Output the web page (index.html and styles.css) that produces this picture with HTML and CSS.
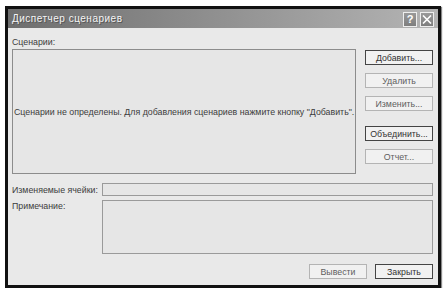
FILE: index.html
```html
<!DOCTYPE html>
<html lang="ru">
<head>
<meta charset="utf-8">
<title>Диспетчер сценариев</title>
<link rel="stylesheet" href="styles.css">
</head>
<body>
<div class="dialog">
  <div class="titlebar">
    <span class="title">Диспетчер сценариев</span>
    <div class="tbtns">
      <span class="tbtn">?</span>
      <span class="tbtn">
        <svg width="10" height="9" viewBox="0 0 10 9"><path d="M1 0.5 L9 8.5 M9 0.5 L1 8.5" stroke="#fff" stroke-width="1.6" fill="none"/></svg>
      </span>
    </div>
  </div>
  <div class="content">
    <div class="lbl-top">Сценарии:</div>
    <div class="main">
      <div class="listbox">Сценарии не определены. Для добавления сценариев нажмите кнопку "Добавить".</div>
      <div class="side">
        <div class="btn def">Добавить...</div>
        <div class="btn dis">Удалить</div>
        <div class="btn dis">Изменить...</div>
        <div class="btn def sep">Объединить...</div>
        <div class="btn dis">Отчет...</div>
      </div>
    </div>
    <div class="row cells">
      <span class="rlabel">Изменяемые ячейки:</span>
      <div class="field"></div>
    </div>
    <div class="row note">
      <span class="rlabel">Примечание:</span>
      <div class="field area"></div>
    </div>
    <div class="footer">
      <div class="btn dis wide">Вывести</div>
      <div class="btn def wide">Закрыть</div>
    </div>
  </div>
</div>
</body>
</html>
```
FILE: styles.css
```css
html, body {
  margin: 0;
  padding: 0;
  background: #fff;
}
body {
  padding: 6px 0 0 5px;
  font-family: "Liberation Sans", "DejaVu Sans", sans-serif;
  font-size: 8.8px;
  color: #3c3c3c;
}
.dialog {
  width: 430px;
  height: 276px;
  border: 3px solid #111;
  background: #e9e9e9;
  display: flex;
  flex-direction: column;
  box-shadow: 1px 1px 1px #888;
}
.titlebar {
  height: 19px;
  background: linear-gradient(to right, #6e6e6e 0%, #8a8a8a 40%, #b4b4b4 100%);
  display: flex;
  align-items: center;
  justify-content: space-between;
  padding: 0 4px 0 4px;
}
.title {
  color: #f4f4f4;
  font-size: 10px;
  letter-spacing: 0.5px;
  text-shadow: 1px 1px 0 #555;
}
.tbtns {
  display: flex;
  gap: 3px;
  padding-top: 1px;
}
.tbtn {
  width: 14px;
  height: 15px;
  box-sizing: border-box;
  border: 1px solid #eee;
  background: linear-gradient(#9a9a9a, #7e7e7e);
  color: #fff;
  font-weight: bold;
  font-size: 11px;
  display: flex;
  align-items: center;
  justify-content: center;
}
.content {
  flex: 1;
  display: flex;
  flex-direction: column;
  padding: 7px 5px 0 4px;
}
.lbl-top {
  height: 12px;
  line-height: 12px;
  padding-top: 1px;
}
.main {
  display: flex;
  gap: 9px;
  margin-top: 1px;
}
.listbox {
  width: 341px;
  height: 123px;
  border: 1px solid #8c8c8c;
  background: #e6e6e6;
  display: flex;
  align-items: center;
  padding-left: 1px;
  white-space: nowrap;
}
.side {
  flex: 1;
  display: flex;
  flex-direction: column;
  gap: 8px;
  padding-top: 1px;
}
.btn {
  height: 15px;
  box-sizing: border-box;
  border: 1px solid #b4b4b4;
  background: #f1f1f1;
  display: flex;
  align-items: center;
  justify-content: center;
  color: #333;
}
.btn.def {
  border-color: #444;
}
.btn.dis {
  color: #5e5e5e;
}
.btn.sep {
  margin-top: 7px;
}
.row {
  display: flex;
}
.rlabel {
  width: 90px;
  flex: none;
}
.cells {
  margin-top: 9px;
  align-items: center;
}
.field {
  flex: 1;
  height: 13px;
  box-sizing: border-box;
  border: 1px solid #9a9a9a;
  background: #e6e6e6;
}
.note {
  margin-top: 4px;
}
.note .rlabel {
  padding-top: 1px;
}
.field.area {
  height: 54px;
}
.footer {
  display: flex;
  justify-content: flex-end;
  gap: 8px;
  margin-top: 10px;
}
.btn.wide {
  width: 58px;
}
```
